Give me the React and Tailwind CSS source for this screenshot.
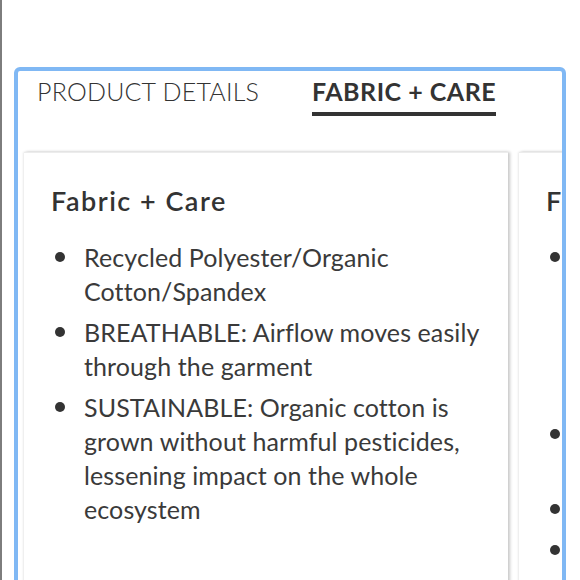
import React from "react";

const font = { fontFamily: "Lato, 'Noto Sans', sans-serif" };

const fabric = [
  ["Recycled Polyester/Organic", "Cotton/Spandex"],
  ["BREATHABLE: Airflow moves easily", "through the garment"],
  [
    "SUSTAINABLE: Organic cotton is",
    "grown without harmful pesticides,",
    "lessening impact on the whole",
    "ecosystem",
  ],
];

const features = [
  ["Fitted silhouette", "with a high neck", "and a zip front", "for easy on", "and off"],
  ["Thumbholes keep", "sleeves in place"],
  ["Hip length"],
  ["Machine wash"],
];

export default function App() {
  return (
    <div className="min-h-screen bg-white border-l-2 border-[#7d7d7d] overflow-hidden" style={font}>
      <div className="pt-[67px] pl-[12px]">
        <div className="w-[552px] h-[530px] rounded-[6px] border-4 border-[#80b8f4] bg-white overflow-hidden">
          <div className="flex pl-[19px] pt-[5px] text-[25px] leading-[30px] text-[#333]">
            <div className="font-light tracking-[0.2px]">PRODUCT DETAILS</div>
            <div className="ml-[53px] flex flex-col">
              <div className="font-bold tracking-[0.5px]">FABRIC + CARE</div>
              <div className="mt-[6px] h-[4px] bg-[#333]" />
            </div>
          </div>
          <div className="mt-[36px] ml-[6px] flex gap-[11px]">
            <Card title="Fabric + Care" items={fabric} />
            <Card title="Features" items={features} />
          </div>
        </div>
      </div>
    </div>
  );
}

function Card({ title, items }) {
  return (
    <div className="w-[484px] shrink-0 h-[440px] bg-white border-t border-[#ececec] shadow-[2px_0_3px_rgba(0,0,0,0.22),-1px_0_2px_rgba(0,0,0,0.08)] pl-[27px] pt-[32px]">
      <h2 className="text-[27px] leading-[32px] font-semibold text-[#333] tracking-[1.5px]">{title}</h2>
      <ul className="mt-[23px] flex flex-col gap-[7px]">
        {items.map((lines, i) => (
          <li key={i} className="flex text-[25px] leading-[34px] text-[#3a3a3a] tracking-[0.1px]">
            <span className="mt-[12px] ml-[4px] mr-[19px] h-[10px] w-[10px] shrink-0 rounded-full bg-[#333]" />
            <span className="whitespace-nowrap">
              {lines.map((l, j) => (
                <span key={j} className="block">{l}</span>
              ))}
            </span>
          </li>
        ))}
      </ul>
    </div>
  );
}
